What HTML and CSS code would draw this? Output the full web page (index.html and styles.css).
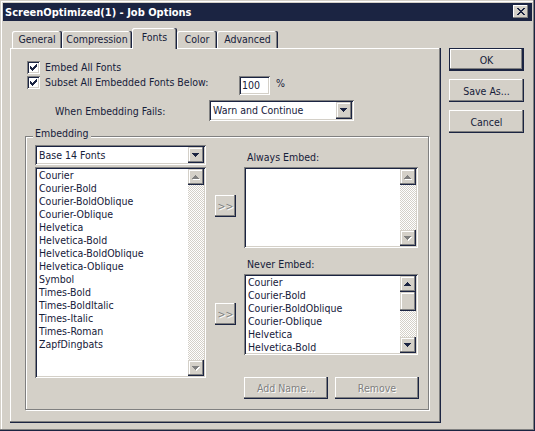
FILE: index.html
```html
<!DOCTYPE html>
<html>
<head>
<meta charset="utf-8">
<title>Job Options</title>
<link rel="stylesheet" href="styles.css">
</head>
<body>
<div class="window">
  <div class="titlebar">
    <span class="title">ScreenOptimized(1) - Job Options</span>
    <div class="close">
      <svg width="8" height="7" viewBox="0 0 8 7"><path fill="#1b2442" d="M0 0h2v1H0zM6 0h2v1H6zM1 1h2v1H1zM5 1h2v1H5zM2 2h4v1H2zM3 3h2v1H3zM2 4h4v1H2zM1 5h2v1H1zM5 5h2v1H5zM0 6h2v1H0zM6 6h2v1H6z"/></svg>
    </div>
  </div>
  <div class="main">
    <div class="tabctl">
      <div class="tabs">
        <div class="tab t-general">General</div>
        <div class="tab t-compression">Compression</div>
        <div class="tab t-fonts active">Fonts</div>
        <div class="tab t-color">Color</div>
        <div class="tab t-advanced">Advanced</div>
      </div>
      <div class="panel">
        <div class="row r1">
          <span class="check"><svg width="9" height="9" viewBox="0 0 9 9"><path fill="#1b2442" d="M1 3h1v3H1zM2 4h1v3H2zM3 5h1v3H3zM4 4h1v3H4zM5 3h1v3H5zM6 2h1v3H6zM7 1h1v3H7z"/></svg></span>
          <span class="cb-label">Embed All Fonts</span>
        </div>
        <div class="row r2">
          <span class="check"><svg width="9" height="9" viewBox="0 0 9 9"><path fill="#1b2442" d="M1 3h1v3H1zM2 4h1v3H2zM3 5h1v3H3zM4 4h1v3H4zM5 3h1v3H5zM6 2h1v3H6zM7 1h1v3H7z"/></svg></span>
          <span class="cb-label wide">Subset All Embedded Fonts Below:</span>
          <div class="field num">100</div>
          <span class="pct">%</span>
        </div>
        <div class="row r3">
          <span class="fail-label">When Embedding Fails:</span>
          <div class="combo w-fail">
            <span class="combo-text">Warn and Continue</span>
            <span class="sbtn dd"><svg width="7" height="4" viewBox="0 0 7 4"><path fill="#1b2442" d="M0 0h7v1H0zM1 1h5v1H1zM2 2h3v1H2zM3 3h1v1H3z"/></svg></span>
          </div>
        </div>
        <div class="group">
          <span class="legend">Embedding</span>
          <div class="group-body">
            <div class="col-left">
              <div class="combo base">
                <span class="combo-text">Base 14 Fonts</span>
                <span class="sbtn dd"><svg width="7" height="4" viewBox="0 0 7 4"><path fill="#1b2442" d="M0 0h7v1H0zM1 1h5v1H1zM2 2h3v1H2zM3 3h1v1H3z"/></svg></span>
              </div>
              <div class="listbox big">
                <div class="items">
                  <div>Courier</div>
                  <div>Courier-Bold</div>
                  <div>Courier-BoldOblique</div>
                  <div>Courier-Oblique</div>
                  <div>Helvetica</div>
                  <div>Helvetica-Bold</div>
                  <div>Helvetica-BoldOblique</div>
                  <div>Helvetica-Oblique</div>
                  <div>Symbol</div>
                  <div>Times-Bold</div>
                  <div>Times-BoldItalic</div>
                  <div>Times-Italic</div>
                  <div>Times-Roman</div>
                  <div>ZapfDingbats</div>
                </div>
                <div class="vscroll">
                  <span class="sbtn"><svg width="8" height="5" viewBox="0 0 8 5"><path fill="#fff" transform="translate(1 1)" d="M3 0h1v1H3zM2 1h3v1H2zM1 2h5v1H1zM0 3h7v1H0z"/><path fill="#808080" d="M3 0h1v1H3zM2 1h3v1H2zM1 2h5v1H1zM0 3h7v1H0z"/></svg></span>
                  <span class="track"></span>
                  <span class="sbtn"><svg width="8" height="5" viewBox="0 0 8 5"><path fill="#fff" transform="translate(1 1)" d="M0 0h7v1H0zM1 1h5v1H1zM2 2h3v1H2zM3 3h1v1H3z"/><path fill="#808080" d="M0 0h7v1H0zM1 1h5v1H1zM2 2h3v1H2zM3 3h1v1H3z"/></svg></span>
                </div>
              </div>
            </div>
            <div class="col-mid">
              <div class="btn arrow first disabled">&gt;&gt;</div>
              <div class="btn arrow second disabled">&gt;&gt;</div>
            </div>
            <div class="col-right">
              <div class="lbl">Always Embed:</div>
              <div class="listbox short">
                <div class="items"></div>
                <div class="vscroll">
                  <span class="sbtn"><svg width="8" height="5" viewBox="0 0 8 5"><path fill="#fff" transform="translate(1 1)" d="M3 0h1v1H3zM2 1h3v1H2zM1 2h5v1H1zM0 3h7v1H0z"/><path fill="#808080" d="M3 0h1v1H3zM2 1h3v1H2zM1 2h5v1H1zM0 3h7v1H0z"/></svg></span>
                  <span class="track"></span>
                  <span class="sbtn"><svg width="8" height="5" viewBox="0 0 8 5"><path fill="#fff" transform="translate(1 1)" d="M0 0h7v1H0zM1 1h5v1H1zM2 2h3v1H2zM3 3h1v1H3z"/><path fill="#808080" d="M0 0h7v1H0zM1 1h5v1H1zM2 2h3v1H2zM3 3h1v1H3z"/></svg></span>
                </div>
              </div>
              <div class="lbl second">Never Embed:</div>
              <div class="listbox short">
                <div class="items">
                  <div>Courier</div>
                  <div>Courier-Bold</div>
                  <div>Courier-BoldOblique</div>
                  <div>Courier-Oblique</div>
                  <div>Helvetica</div>
                  <div>Helvetica-Bold</div>
                </div>
                <div class="vscroll">
                  <span class="sbtn"><svg width="8" height="5" viewBox="0 0 8 5"><path fill="#1b2442" d="M3 0h1v1H3zM2 1h3v1H2zM1 2h5v1H1zM0 3h7v1H0z"/></svg></span>
                  <span class="thumb"></span>
                  <span class="track"></span>
                  <span class="sbtn"><svg width="8" height="5" viewBox="0 0 8 5"><path fill="#1b2442" d="M0 0h7v1H0zM1 1h5v1H1zM2 2h3v1H2zM3 3h1v1H3z"/></svg></span>
                </div>
              </div>
              <div class="btnrow">
                <div class="btn disabled">Add Name...</div>
                <div class="btn disabled">Remove</div>
              </div>
            </div>
          </div>
        </div>
      </div>
    </div>
    <div class="side">
      <div class="btn default">OK</div>
      <div class="btn">Save As...</div>
      <div class="btn">Cancel</div>
    </div>
  </div>
</div>
</body>
</html>
```

FILE: styles.css
```css
* { box-sizing: border-box; }
html, body { margin: 0; padding: 0; background: #d4d0c8; }
body {
  font-family: "DejaVu Sans Condensed", "Liberation Sans", sans-serif;
  font-size: 10.5px;
  color: #16203a;
}

.window {
  width: 535px;
  height: 431px;
  padding: 3px;
  background: #d4d0c8;
  box-shadow: inset -1px -1px 0 #1b2442, inset -2px -2px 0 #808080, inset 1px 1px 0 #d4d0c8, inset 2px 2px 0 #fff;
}

.titlebar {
  height: 18px;
  background: #1b2442;
  display: flex;
  align-items: center;
  justify-content: space-between;
  padding: 0 3px 0 2px;
}
.title {
  color: #fff;
  font-weight: bold;
  font-size: 11px;
}
.close {
  width: 16px;
  height: 14px;
  padding: 3px 0 0 4px;
  background: #d4d0c8;
  box-shadow: inset -1px -1px 0 #1b2442, inset -2px -2px 0 #808080, inset 1px 1px 0 #fff;
}
.close svg, .check svg, .sbtn svg { display: block; }

.main {
  display: flex;
  padding: 7px 0 0 7px;
}
.tabctl {
  width: 431px;
  display: flex;
  flex-direction: column;
}
.tabs {
  display: flex;
  align-items: flex-end;
  height: 20px;
  padding-left: 2px;
  position: relative;
  z-index: 1;
}
.tab {
  height: 17px;
  line-height: 15px;
  padding-top: 1px;
  text-align: center;
  background: #d4d0c8;
  border-top-left-radius: 2px;
  border-top-right-radius: 2px;
  box-shadow: inset -1px 0 0 #1b2442, inset -2px 0 0 #808080, inset 1px 1px 0 #fff;
}
.tab.active {
  height: 21px;
  margin-bottom: -1px;
  padding-top: 2px;
}
.t-general { width: 50px; }
.t-compression { width: 70px; }
.t-fonts { width: 45px; }
.t-color { width: 40px; }
.t-advanced { width: 61px; }

.panel {
  height: 375px;
  padding: 13px 0 0 17px;
  box-shadow: inset -1px -1px 0 #1b2442, inset -2px -2px 0 #808080, inset 1px 1px 0 #fff;
}

.row { display: flex; align-items: center; }
.r1 { height: 13px; }
.r2 { margin-top: 2px; align-items: flex-start; }
.r3 { margin-top: 5px; height: 21px; }

.check {
  width: 13px;
  height: 13px;
  flex: none;
  padding: 2px;
  background: #fff;
  box-shadow: inset 1px 1px 0 #808080, inset -1px -1px 0 #fff, inset 2px 2px 0 #1b2442, inset -2px -2px 0 #d4d0c8;
}
.cb-label { margin-left: 5px; line-height: 13px; }
.cb-label.wide { width: 194px; }

.field {
  background: #fff;
  box-shadow: inset 1px 1px 0 #808080, inset -1px -1px 0 #fff, inset 2px 2px 0 #1b2442, inset -2px -2px 0 #d4d0c8;
}
.num {
  width: 31px;
  height: 19px;
  padding: 2px 0 0 3px;
  line-height: 15px;
}
.pct { margin-left: 6px; line-height: 13px; margin-top: 1px; }

.fail-label { margin-left: 28px; width: 154px; }

.combo {
  display: flex;
  height: 21px;
  padding: 2px;
  background: #fff;
  box-shadow: inset 1px 1px 0 #808080, inset -1px -1px 0 #fff, inset 2px 2px 0 #1b2442, inset -2px -2px 0 #d4d0c8;
}
.combo-text { flex: 1; padding-left: 2px; line-height: 17px; white-space: nowrap; }
.w-fail { width: 145px; }
.combo.base { height: 20px; }
.combo.base .combo-text { line-height: 16px; }

.sbtn {
  width: 16px;
  height: 16px;
  flex: none;
  display: block;
  padding: 6px 0 0 4px;
  background: #d4d0c8;
  box-shadow: inset -1px -1px 0 #1b2442, inset -2px -2px 0 #808080, inset 1px 1px 0 #d4d0c8, inset 2px 2px 0 #fff;
}
.sbtn.dd { height: auto; }

.group {
  margin: 15px 0 0 -2px;
  width: 404px;
  height: 274px;
  border: 1px solid #808080;
  box-shadow: inset 1px 1px 0 #fff, 1px 1px 0 #fff;
  display: flex;
  flex-direction: column;
}
.legend {
  align-self: flex-start;
  margin: -10px 0 0 7px;
  padding: 0 2px;
  background: #d4d0c8;
  line-height: 13px;
}
.group-body {
  display: flex;
  margin: 5px 0 0 9px;
}
.col-left { width: 171px; }
.col-mid {
  width: 21px;
  margin-left: 9px;
  display: flex;
  flex-direction: column;
}
.col-right { width: 175px; margin-left: 8px; }

.listbox {
  display: flex;
  padding: 2px;
  background: #fff;
  box-shadow: inset 1px 1px 0 #808080, inset -1px -1px 0 #fff, inset 2px 2px 0 #1b2442, inset -2px -2px 0 #d4d0c8;
}
.listbox.big { margin-top: 2px; height: 211px; }
.listbox.short { width: 174px; height: 81px; margin-top: 3px; }
.items {
  flex: 1;
  padding-left: 2px;
  line-height: 13px;
  overflow: hidden;
  white-space: nowrap;
}
.vscroll {
  width: 16px;
  display: flex;
  flex-direction: column;
}
.track {
  flex: 1;
  background: repeating-conic-gradient(#d4d0c8 0 25%, #fff 0 50%) 0 0 / 2px 2px;
}
.thumb {
  height: 19px;
  flex: none;
  background: #d4d0c8;
  box-shadow: inset -1px -1px 0 #1b2442, inset -2px -2px 0 #808080, inset 1px 1px 0 #d4d0c8, inset 2px 2px 0 #fff;
}

.lbl { margin-top: 6px; line-height: 13px; padding-left: 3px; }
.lbl.second { margin-top: 10px; }

.btn {
  display: flex;
  align-items: center;
  justify-content: center;
  background: #d4d0c8;
  white-space: nowrap;
  box-shadow: inset -1px -1px 0 #1b2442, inset -2px -2px 0 #808080, inset 1px 1px 0 #fff;
}
.btn.disabled { color: #808080; text-shadow: 1px 1px 0 #fff; }
.btn.arrow { width: 21px; height: 22px; }
.btn.first { margin-top: 50px; }
.btn.second { margin-top: 86px; }

.btnrow {
  display: flex;
  justify-content: space-between;
  margin-top: 22px;
}
.btnrow .btn { width: 84px; height: 22px; }

.side {
  margin: 20px 0 0 8px;
  display: flex;
  flex-direction: column;
  gap: 8px;
}
.side .btn { width: 75px; height: 23px; }
.btn.default {
  box-shadow: inset 0 0 0 1px #1b2442, inset -2px -2px 0 #1b2442, inset -3px -3px 0 #808080, inset 2px 2px 0 #fff;
}
```
